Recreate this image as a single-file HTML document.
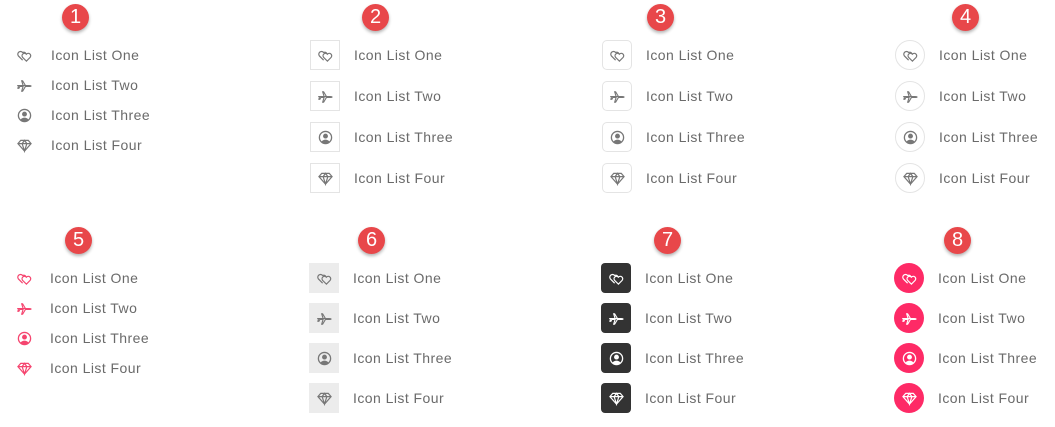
<!DOCTYPE html>
<html><head><meta charset="utf-8"><style>
body{margin:0;width:1055px;height:427px;background:#fff;position:relative;overflow:hidden;font-family:"Liberation Sans",sans-serif;}
.b{position:absolute;width:27px;height:27px;border-radius:50%;background:#e8474a;color:#fff;font-size:20px;line-height:27px;text-align:center;box-shadow:0 2px 3px rgba(0,0,0,.3);}
.r{position:absolute;height:30px;display:flex;align-items:center;font-size:14px;letter-spacing:0.45px;color:#6a6a6a;}
.i{width:30px;height:30px;display:flex;align-items:center;justify-content:center;box-sizing:border-box;margin-right:14px;}
.i svg{width:15px;height:15px}
.g2 .i{border:1px solid #e4e4e4}
.g3 .i{border:1px solid #e4e4e4;border-radius:5px}
.g4 .i{border:1px solid #e4e4e4;border-radius:50%}
.g6 .i{background:#ececec}
.g7 .i{background:#333;border-radius:4px;color:#fff}
.g8 .i{background:#fe2a66;border-radius:50%;color:#fff}
.g1 .i,.g5 .i{width:auto;margin-right:0}
.g5 .i{color:#f5456f}
.g1 .i,.g2 .i,.g3 .i,.g4 .i,.g6 .i{color:#777}
</style></head><body>
<svg width="0" height="0" style="position:absolute">
<defs>
<symbol id="h" viewBox="0 0 16 16"><g fill="none" stroke="currentColor" stroke-width="1.3"><path d="M6 13 L1.5 8.5 A2.6 2.6 0 0 1 6 4.8 A2.6 2.6 0 0 1 9.5 6"/><path d="M10 14 L6 10 A2.4 2.4 0 0 1 10 6.6 A2.4 2.4 0 0 1 14 10 Z"/></g></symbol>
<symbol id="p" viewBox="0 0 16 16"><path fill="none" stroke="currentColor" stroke-width="1.2" d="M1 8 H13 Q15 8 15 8.5 Q15 9 13 9 H9 L6 14 H5 L6.5 9 H3 L2 11 H1 L1.5 8.5 Z M6.5 8 L5 3 H6 L9 8"/></symbol>
<symbol id="u" viewBox="0 0 16 16"><circle cx="8" cy="8" r="6.5" fill="none" stroke="currentColor" stroke-width="1.4"/><circle cx="8" cy="6.5" r="2.6" fill="currentColor"/><path d="M3.5 12.5 Q8 8 12.5 12.5 Q8 16 3.5 12.5Z" fill="currentColor"/></symbol>
<symbol id="d" viewBox="0 0 16 16"><path fill="none" stroke="currentColor" stroke-width="1.3" d="M4 2.5 H12 L15 6 L8 14 L1 6 Z M1 6 H15 M5.5 6 L8 14 L10.5 6 M5.5 6 L8 2.5 L10.5 6"/></symbol>
</defs></svg>

<div class="b" style="left:62px;top:4px">1</div>
<div class="b" style="left:362px;top:4px">2</div>
<div class="b" style="left:647px;top:4px">3</div>
<div class="b" style="left:952px;top:4px">4</div>
<div class="b" style="left:65px;top:227px">5</div>
<div class="b" style="left:358px;top:227px">6</div>
<div class="b" style="left:654px;top:227px">7</div>
<div class="b" style="left:944px;top:227px">8</div>

<div id="c"></div>
<script>
var groups=[
 ['g1',17,[55,85,115,145],51],
 ['g2',310,[55,96,137,178],354],
 ['g3',602,[55,96,137,178],646],
 ['g4',895,[55,96,137,178],939],
 ['g5',17,[278,308,338,368],50],
 ['g6',309,[278,318,358,398],353],
 ['g7',601,[278,318,358,398],646],
 ['g8',894,[278,318,358,398],938]];
var icons=['h','p','u','d'],names=['One','Two','Three','Four'],h='';
groups.forEach(function(g){
 for(var k=0;k<4;k++){
  var small=(g[0]=='g1'||g[0]=='g5');
  h+='<div class="r '+g[0]+'" style="left:'+g[1]+'px;top:'+(g[2][k]-15)+'px"><span class="i"'+(small?' style="width:'+(g[3]-g[1])+'px;justify-content:flex-start"':'')+'><svg><use href="#'+icons[k]+'"/></svg></span>Icon List '+names[k]+'</div>';
 }
});
document.getElementById('c').innerHTML=h;
</script>
</body></html>
